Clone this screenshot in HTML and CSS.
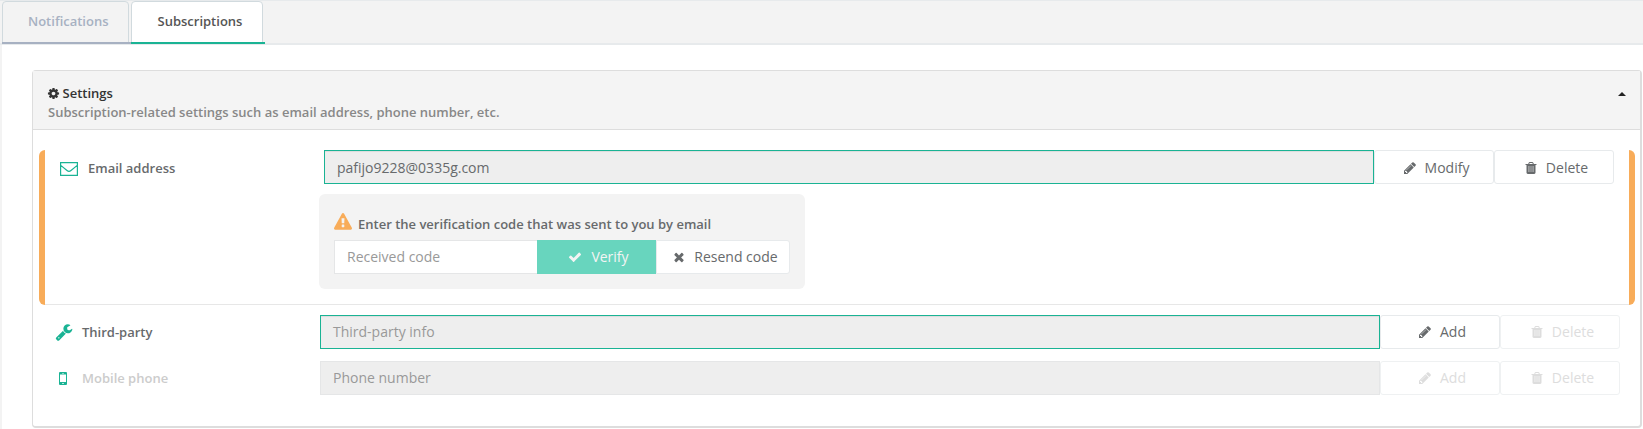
FILE: index.html
```
<!DOCTYPE html>
<html lang="en">
<head>
<meta charset="utf-8">
<title>Subscriptions</title>
<link rel="stylesheet" href="styles.css">
</head>
<body>
<svg class="sprite" aria-hidden="true">
  <symbol id="gear" viewBox="0 0 1792 1792"><path d="M1152 896q0-106-75-181t-181-75-181 75-75 181 75 181 181 75 181-75 75-181zm512-109v222q0 12-8 23t-20 13l-185 28q-19 54-39 91 35 50 107 138 10 12 10 25t-9 23q-27 37-99 108t-94 71q-12 0-26-9l-138-108q-44 23-91 38-16 136-29 186-7 28-36 28h-222q-14 0-24.500-8.500t-11.500-21.500l-28-184q-49-16-90-37l-141 107q-10 9-25 9-14 0-25-11-126-114-165-168-7-10-7-23 0-12 8-23 15-21 51-66.500t54-70.500q-27-50-41-99l-183-27q-13-2-21-12.500t-8-23.500v-222q0-12 8-23t19-13l186-28q14-46 39-92-40-57-107-138-10-12-10-24 0-10 9-23 26-36 98.500-107.500t94.500-71.500q13 0 26 10l138 107q44-23 91-38 16-136 29-186 7-28 36-28h222q14 0 24.500 8.500t11.500 21.500l28 184q49 16 90 37l142-107q9-9 24-9 13 0 25 10 129 119 165 170 7 8 7 22 0 12-8 23-15 21-51 66.500t-54 70.500q26 50 41 98l183 28q13 2 21 12.500t8 23.500z"/></symbol>
  <symbol id="pencil" viewBox="0 0 1792 1792"><path d="M491 1536l91-91-235-235-91 91v107h128v128h107zm523-928q0-22-22-22-10 0-17 7l-542 542q-7 7-7 17 0 22 22 22 10 0 17-7l542-542q7-7 7-17zm-54-192l416 416-832 832h-416v-416zm683 96q0 53-37 90l-166 166-416-416 166-165q36-38 90-38 53 0 91 38l235 234q37 39 37 91z"/></symbol>
  <symbol id="trash" viewBox="0 0 1792 1792"><path opacity=".5" d="M560 620h672v800H560z"/><path fill-rule="evenodd" d="M576 640h128v768h-128zM832 640h128v768h-128zM1088 640h128v768h-128zM672 384h448l-48-117q-7-9-17-11h-317q-10 2-17 11zm928 32v64q0 14-9 23t-23 9h-96v948q0 83-47 143.500t-113 60.500h-832q-66 0-113-58.500t-47-141.500v-952h-96q-14 0-23-9t-9-23v-64q0-14 9-23t23-9h309l70-167q15-37 54-63t79-26h320q40 0 79 26t54 63l70 167h309q14 0 23 9t9 23z"/></symbol>
  <symbol id="check" viewBox="0 0 1792 1792"><path d="M1671 566q0 40-28 68l-724 724-136 136q-28 28-68 28t-68-28l-136-136-362-362q-28-28-28-68t28-68l136-136q28-28 68-28t68 28l294 295 656-657q28-28 68-28t68 28l136 136q28 28 28 68z"/></symbol>
  <symbol id="times" viewBox="0 0 1792 1792"><path d="M1490 1322q0 40-28 68l-136 136q-28 28-68 28t-68-28l-294-294-294 294q-28 28-68 28t-68-28l-136-136q-28-28-28-68t28-68l294-294-294-294q-28-28-28-68t28-68l136-136q28-28 68-28t68 28l294 294 294-294q28-28 68-28t68 28l136 136q28 28 28 68t-28 68l-294 294 294 294q28 28 28 68z"/></symbol>
  <symbol id="warning" viewBox="0 0 1792 1792"><path d="M1024 1375v-190q0-14-9.500-23.500t-22.500-9.500h-192q-13 0-22.500 9.500t-9.500 23.500v190q0 14 9.500 23.500t22.500 9.500h192q13 0 22.500-9.500t9.500-23.500zm-2-374l18-459q0-12-10-19-13-11-24-11h-220q-11 0-24 11-10 7-10 21l17 457q0 10 10 16.500t24 6.500h185q14 0 23.500-6.500t10.500-16.500zm-14-934l768 1408q35 63-2 126-17 29-46.500 46t-63.500 17h-1536q-34 0-63.500-17t-46.500-46q-37-63-2-126l768-1408q17-31 47-49t65-18 65 18 47 49z"/></symbol>
  <symbol id="wrench" viewBox="0 0 1792 1792"><path d="M448 1472q0-26-19-45t-45-19-45 19-19 45 19 45 45 19 45-19 19-45zm644-420l-682 682q-37 37-90 37-52 0-91-37l-106-108q-38-36-38-90 0-53 38-91l681-681q39 98 114.500 173.500t173.500 114.500zm634-435q0 39-23 106-47 134-164.500 217.500t-258.500 83.500q-185 0-316.500-131.500t-131.500-316.500 131.500-316.500 316.500-131.500q58 0 121.500 16.500t107.500 46.500q16 11 16 28t-16 28l-293 169v224l193 107q5-3 79-48.500t135.500-81 70.500-35.500q15 0 23.500 10t8.500 25z"/></symbol>
</svg>

<nav class="tabs">
  <a class="tab">Notifications</a>
  <a class="tab tab-active">Subscriptions</a>
</nav>

<main class="page">
  <section class="panel">
    <header class="panel-head">
      <div>
        <div class="panel-title"><svg class="icon-gear"><use href="#gear"/></svg>Settings</div>
        <div class="panel-sub">Subscription-related settings such as email address, phone number, etc.</div>
      </div>
      <svg class="caret" viewBox="0 0 8 4"><path d="M0 4L4 0l4 4z"/></svg>
    </header>
    <div class="panel-body">
      <div class="row row-warn">
        <div class="label"><svg class="icon-mail" viewBox="0 0 18 14"><path d="M.6.6h16.800v12.800H.6zM.8 3.400l6.200 5.100q2 1.600 4 0l6.200-5.100"/></svg>Email address</div>
        <div class="content">
          <div class="group group-email">
            <div class="field field-on filled">pafijo9228@0335g.com</div>
            <div class="btn"><svg class="icon"><use href="#pencil"/></svg>Modify</div>
            <div class="btn"><svg class="icon"><use href="#trash"/></svg>Delete</div>
          </div>
          <div class="verify">
            <div class="verify-title"><svg class="icon-warn"><use href="#warning"/></svg>Enter the verification code that was sent to you by email</div>
            <div class="group">
              <div class="field code">Received code</div>
              <div class="btn btn-primary"><svg class="icon"><use href="#check"/></svg>Verify</div>
              <div class="btn btn-resend"><svg class="icon"><use href="#times"/></svg>Resend code</div>
            </div>
          </div>
        </div>
      </div>
      <div class="row row-plain">
        <div class="label"><svg class="icon-wrench"><use href="#wrench"/></svg>Third-party</div>
        <div class="content group">
          <div class="field field-on">Third-party info</div>
          <div class="btn"><svg class="icon"><use href="#pencil"/></svg>Add</div>
          <div class="btn btn-off"><svg class="icon"><use href="#trash"/></svg>Delete</div>
        </div>
      </div>
      <div class="row row-plain row-phone">
        <div class="label label-off"><svg class="icon-phone" viewBox="0 0 8 13"><path fill-rule="evenodd" d="M1 0h6q1 0 1 1v11q0 1-1 1H1q-1 0-1-1V1q0-1 1-1zM1 2.500v7.500h6V2.500zM3 .900v.5h2V.9zM3.300 11v1h1.400v-1z"/></svg>Mobile phone</div>
        <div class="content group">
          <div class="field">Phone number</div>
          <div class="btn btn-off"><svg class="icon"><use href="#pencil"/></svg>Add</div>
          <div class="btn btn-off"><svg class="icon"><use href="#trash"/></svg>Delete</div>
        </div>
      </div>
    </div>
  </section>
</main>
</body>
</html>
```
FILE: styles.css
```
* { box-sizing: border-box; }
body {
  margin: 0;
  height: 429px;
  overflow: hidden;
  background: #f3f3f3;
  color: #676a6c;
  font: 14px/20px "Open Sans", "Noto Sans", sans-serif;
}
svg { display: block; flex: none; fill: currentColor; }
.sprite { position: absolute; width: 0; height: 0; }

.tabs {
  display: flex;
  height: 45px;
  padding-left: 2px;
  border-top: 1px solid #e7eaec;
  border-bottom: 2px solid #e7eaec;
}
.tab {
  height: 43px;
  width: 129px;
  background: linear-gradient(#a7b1c2, #a7b1c2) left bottom / 100% 2px no-repeat;
  color: #a7b1c2;
  font-weight: 600;
  font-size: 13px;
  line-height: 40px;
  padding-left: 26px;
  position: relative;
}
.tab::before {
  content: "";
  position: absolute;
  z-index: -1;
  inset: 0 2px 1px 0;
  border: 1px solid #d1dade;
  border-radius: 4px 4px 0 0;
}
.tab-active {
  width: 134px;
  padding-left: 26.5px;
  color: #555;
  background-image: linear-gradient(#1ab394, #1ab394);
}
.tab-active::before { background: #fff; }

.page {
  margin-left: 2px;
  height: 384px;
  padding: 25px 1px 0 30px;
  background: #fff;
}
.panel {
  height: 358px;
  border: 1px solid #ddd;
  border-right-width: 2px;
  border-bottom-width: 2px;
  border-radius: 4px;
}
.panel-head {
  display: flex;
  justify-content: space-between;
  height: 59px;
  padding: 13px 14px 0 15px;
  background: #f4f4f4;
  border-bottom: 1px solid #ddd;
  font-size: 13px;
  font-weight: 600;
  line-height: 19px;
}
.panel-title { display: flex; align-items: center; color: #333; }
.icon-gear { width: 13px; height: 13px; margin: 0 2.5px 0 -1px; }
.panel-sub { color: #888; }
.caret { width: 8px; height: 4px; margin-top: 8px; color: #222; }
.panel-body { padding: 20px 5px 0 6px; }

.row { display: flex; }
.label {
  display: flex;
  align-items: center;
  height: 34px;
  font-size: 13px;
  font-weight: 600;
}
.label-off { color: #ccc; }
.row-warn {
  height: 155px;
  padding-left: 15px;
  padding-right: 15px;
  border: solid #f8ac59;
  border-width: 0 6px;
  border-radius: 6px;
  background: linear-gradient(#e7e7e7, #e7e7e7) bottom / 100% 1px no-repeat;
}
.row-warn .label { width: 259px; height: 35px; }
.row-plain { padding: 10px 15px 0 16px; }
.row-phone { padding-top: 12px; }
.row-plain .label { width: 265px; }
.icon-mail { width: 18px; height: 14px; margin: 3px 10px 0 0; fill: none; stroke: #1ab394; stroke-width: 1.2; }
.icon-wrench { width: 18px; height: 18px; margin-right: 9px; color: #1ab394; }
.icon-phone { width: 8px; height: 13px; margin: 0 15px 0 4px; color: #1ab394; }
.content { flex: 1; min-width: 0; }
.group { display: flex; height: 34px; }
.group-email { padding-left: 5px; }

.field {
  flex: 1;
  height: 34px;
  padding: 6px 12px;
  border: 1px solid #e5e6e7;
  background: #eee;
  color: #999;
}
.field-on { border-color: #1ab394; box-shadow: inset 0 1px 1px rgba(0, 0, 0, .075); }
.filled { padding-top: 7px; color: #676a6c; }
.btn {
  display: flex;
  align-items: center;
  justify-content: center;
  width: 120px;
  height: 34px;
  padding-left: 4px;
  border: 1px solid #e7eaec;
  border-radius: 3px;
  background: #fff;
}
.group-email .btn { padding-top: 1px; }
.btn-off { opacity: .65; color: #ccc; }
.icon { width: 14px; height: 14px; margin-right: 8px; }

.verify {
  width: 486px;
  height: 95px;
  margin-top: 10px;
  padding: 18px 15px 0;
  border-radius: 6px;
  background: #f3f3f3;
}
.verify-title {
  display: flex;
  height: 28px;
  font-size: 13px;
  font-weight: 600;
  line-height: 25px;
}
.icon-warn { width: 18px; height: 18px; margin: 1px 6px 0 0; color: #f8ac59; }
.code { flex: none; width: 203px; border-right: 0; background: #fff; }
.btn-primary { width: 119px; border: 0; border-radius: 0; background: #68d5be; color: #f4f4f4; }
.btn-primary .icon { margin-right: 9px; }
.btn-resend { width: 134px; border-radius: 0 3px 3px 0; }
```
